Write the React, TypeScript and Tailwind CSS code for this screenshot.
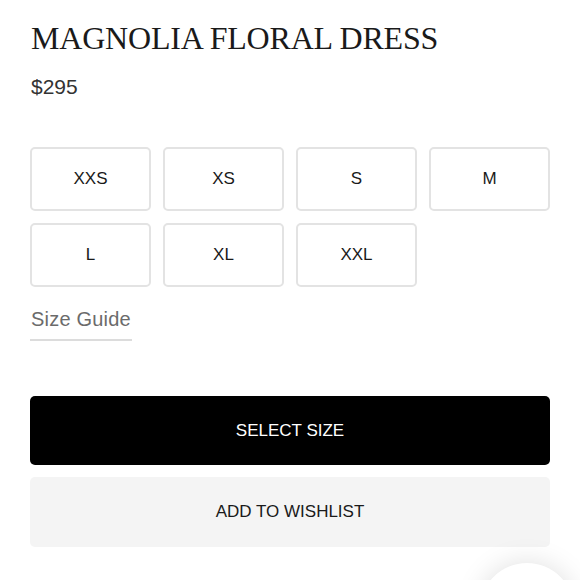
import React from "react";

const sizes = ["XXS", "XS", "S", "M", "L", "XL", "XXL"];

export default function App() {
  return (
    <div className="relative w-[580px] h-[580px] overflow-hidden bg-white font-['Liberation_Sans',Arial,sans-serif]">
      <div className="px-[30px] pt-[22px]">
        <h1 className="font-['Liberation_Serif','Times_New_Roman',serif] text-[32px] leading-[32px] tracking-[-0.2px] text-[#1a1a1a] font-normal pl-[1px]">
          MAGNOLIA FLORAL DRESS
        </h1>
        <div className="mt-[23px] text-[21px] leading-[20px] text-[#333333] pl-[1px]">$295</div>

        <div className="mt-[50px] grid grid-cols-4 gap-[12px]">
          {sizes.map((s) => (
            <button
              key={s}
              className="h-[64px] rounded-[5px] border-2 border-[#e3e3e3] bg-white flex items-center justify-center text-[17px] text-[#1a1a1a]"
            >
              {s}
            </button>
          ))}
        </div>

        <div className="mt-[22px] flex">
          <span className="text-[20px] leading-[20px] tracking-[0.2px] text-[#6b6b6b] pb-[10px] border-b-2 border-[#dcdcdc] pl-[1px] pr-[1px]">
            Size Guide
          </span>
        </div>

        <button className="mt-[55px] w-full h-[69px] rounded-[5px] bg-black text-white text-[17px] flex items-center justify-center">
          SELECT SIZE
        </button>
        <button className="mt-[12px] w-full h-[70px] rounded-[5px] bg-[#f4f4f4] text-[#1a1a1a] text-[17px] flex items-center justify-center">
          ADD TO WISHLIST
        </button>
      </div>

      <div className="absolute left-[480px] top-[563px] w-[94px] h-[94px] rounded-full bg-white shadow-[0_0_28px_rgba(0,0,0,0.13)]" />
    </div>
  );
}
